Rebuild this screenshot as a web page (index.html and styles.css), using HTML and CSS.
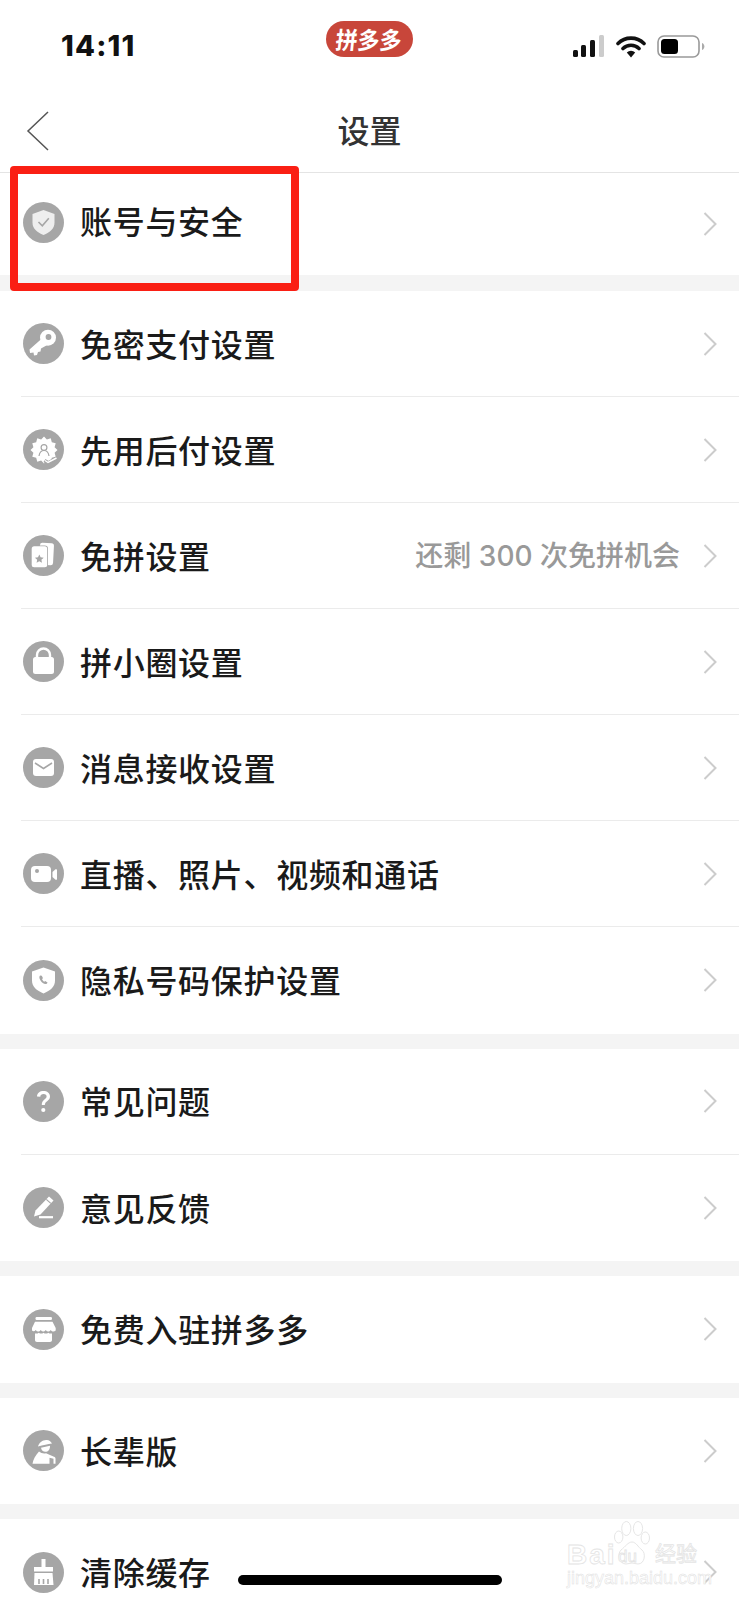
FILE: index.html
```html
<!DOCTYPE html>
<html lang="zh-CN">
<head>
    <meta charset="UTF-8">
    <meta name="viewport" content="width=device-width, initial-scale=1.0">
    <title>设置</title>
    <link rel="stylesheet" href="styles.css">
</head>
<body>
    <div class="screen">
        <div class="status-bar">
            <div class="time">14:11</div>
            <div class="app-pill"><span class="pill-text">拼多多</span></div>
            <div class="status-icons">
                <svg width="32" height="22" viewBox="0 0 32 22"><rect x="0" y="15" width="5" height="7" rx="1.5" fill="#111"/><rect x="8" y="10" width="5" height="12" rx="1.5" fill="#111"/><rect x="17" y="5" width="5" height="17" rx="1.5" fill="#111"/><rect x="26" y="0" width="5" height="22" rx="1.5" fill="#ccc"/></svg>
                <svg width="30" height="23" viewBox="0 0 30 23"><path d="M2 8.5a18.5 18.5 0 0 1 26 0M7 13.5a11.5 11.5 0 0 1 16 0" fill="none" stroke="#111" stroke-width="3.6" stroke-linecap="round"/><path d="M10.8 17.4a6 6 0 0 1 8.4 0L15 22.5z" fill="#111"/></svg>
                <svg width="48" height="23" viewBox="0 0 48 23"><rect x="1" y="1" width="41" height="21" rx="6" fill="none" stroke="#999" stroke-width="1.6"/><rect x="4" y="4" width="17" height="15" rx="3.5" fill="#000"/><path d="M45 8c1.6.6 2.4 2 2.4 3.5S46.600 14.400 45 15z" fill="#aaa"/></svg>
            </div>
        </div>

        <div class="nav">
            <svg class="back" width="24" height="40" viewBox="0 0 24 40"><path d="M22 1 2 20l20 19" fill="none" stroke="#555" stroke-width="1.5"/></svg>
            <h1 class="title">设置</h1>
        </div>

        <div class="group">
            <div class="row row-first">
                <svg class="icon" viewBox="0 0 41 41"><circle cx="20.500" cy="20.500" r="20.500" fill="#a6a6a6"/><path d="M20.500 8l11 4v8.500c0 6-4.500 10-11 12.500-6.500-2.500-11-6.500-11-12.500V12z" fill="#eee"/><path d="M15.500 20l3.800 3.800 6.500-7.500" fill="none" stroke="#a6a6a6" stroke-width="1.600"/></svg>
                <span class="label">账号与安全</span>
                <svg class="chevron" viewBox="0 0 14 24"><path d="M1.500 1 12.500 12 1.500 23" fill="none" stroke="#ccc" stroke-width="2"/></svg>
            </div>
        </div>

        <div class="band band-first"></div>

        <div class="group">
            <div class="row">
                <svg class="icon" viewBox="0 0 41 41"><circle cx="20.500" cy="20.500" r="20.500" fill="#a6a6a6"/><circle cx="25" cy="14.700" r="8" fill="#fff"/><path d="M19.500 15 6.500 26.500l.5 3.500 3.500-.5.500 3 3-.5 1-3 2.500-.5.500-3 9-5z" fill="#fff"/><circle cx="25.500" cy="14" r="2.900" fill="#a6a6a6"/></svg>
                <span class="label">免密支付设置</span>
                <svg class="chevron" viewBox="0 0 14 24"><path d="M1.500 1 12.500 12 1.500 23" fill="none" stroke="#ccc" stroke-width="2"/></svg>
            </div>
            <div class="row">
                <svg class="icon" viewBox="0 0 41 41"><circle cx="20.500" cy="20.500" r="20.500" fill="#a6a6a6"/><polygon points="34.500,21 31.600,23.850 32.700,27.750 28.800,28.800 27.750,32.700 23.850,31.600 21,34.500 18.150,31.600 14.250,32.700 13.200,28.800 9.300,27.750 10.400,23.850 7.500,21 10.400,18.150 9.300,14.250 13.200,13.200 14.250,9.300 18.150,10.400 21,7.500 23.850,10.400 27.750,9.300 28.800,13.200 32.700,14.250 31.600,18.150" fill="#fff"/><circle cx="21" cy="18.500" r="2.900" fill="none" stroke="#a6a6a6" stroke-width="1.200"/><path d="M16 27c.5-3.500 2.500-5.500 5-5.500s4.500 2 5 5.500" fill="none" stroke="#a6a6a6" stroke-width="1.200"/><path d="M21.500 31.500l3.500 2.500 9-5" fill="none" stroke="#a6a6a6" stroke-width="3.600"/><path d="M22 31.500l3 2 8.500-4.500" fill="none" stroke="#fff" stroke-width="1.500"/></svg>
                <span class="label">先用后付设置</span>
                <svg class="chevron" viewBox="0 0 14 24"><path d="M1.500 1 12.500 12 1.500 23" fill="none" stroke="#ccc" stroke-width="2"/></svg>
            </div>
            <div class="row">
                <svg class="icon" viewBox="0 0 41 41"><circle cx="20.500" cy="20.500" r="20.500" fill="#a6a6a6"/><rect x="16.500" y="8" width="14" height="22" rx="2.500" fill="#fff" transform="rotate(3 23 19)"/><rect x="8.700" y="11.300" width="15.500" height="21" rx="2.500" fill="#fff" stroke="#a6a6a6" stroke-width="1.600" paint-order="stroke"/><path d="M16.300 19.500l1.300 2.800 3.100.4-2.300 2.100.6 3-2.700-1.500-2.700 1.500.6-3-2.300-2.100 3.100-.4z" fill="#a6a6a6"/></svg>
                <span class="label">免拼设置</span>
                <span class="value">还剩 300 次免拼机会</span>
                <svg class="chevron" viewBox="0 0 14 24"><path d="M1.500 1 12.500 12 1.500 23" fill="none" stroke="#ccc" stroke-width="2"/></svg>
            </div>
            <div class="row">
                <svg class="icon" viewBox="0 0 41 41"><circle cx="20.500" cy="20.500" r="20.500" fill="#a6a6a6"/><path d="M14 17v-3a6.500 6.500 0 0 1 13 0v3" fill="none" stroke="#fff" stroke-width="2.400"/><rect x="10" y="16" width="21" height="17" rx="2.500" fill="#fff"/></svg>
                <span class="label">拼小圈设置</span>
                <svg class="chevron" viewBox="0 0 14 24"><path d="M1.500 1 12.500 12 1.500 23" fill="none" stroke="#ccc" stroke-width="2"/></svg>
            </div>
            <div class="row">
                <svg class="icon" viewBox="0 0 41 41"><circle cx="20.500" cy="20.500" r="20.500" fill="#a6a6a6"/><rect x="10" y="12" width="21" height="17" rx="3" fill="#fff"/><path d="M12 16l8.500 5.500L29 16" fill="none" stroke="#a6a6a6" stroke-width="1.500"/></svg>
                <span class="label">消息接收设置</span>
                <svg class="chevron" viewBox="0 0 14 24"><path d="M1.500 1 12.500 12 1.500 23" fill="none" stroke="#ccc" stroke-width="2"/></svg>
            </div>
            <div class="row">
                <svg class="icon" viewBox="0 0 41 41"><circle cx="20.500" cy="20.500" r="20.500" fill="#a6a6a6"/><rect x="8" y="13" width="20" height="16" rx="4" fill="#fff"/><path d="M29.500 19l3-2.700c.6-.4 1.500 0 1.500.8v8.800c0 .8-.9 1.200-1.500.8l-3-2.700z" fill="#fff"/><circle cx="14" cy="18" r="2" fill="#a6a6a6"/></svg>
                <span class="label">直播、照片、视频和通话</span>
                <svg class="chevron" viewBox="0 0 14 24"><path d="M1.500 1 12.500 12 1.500 23" fill="none" stroke="#ccc" stroke-width="2"/></svg>
            </div>
            <div class="row">
                <svg class="icon" viewBox="0 0 41 41"><circle cx="20.500" cy="20.500" r="20.500" fill="#a6a6a6"/><path d="M20.500 7.500l11.500 4v9c0 6-4.500 10-11.500 13-7-3-11.500-7-11.500-13v-9z" fill="#fff"/><path d="M17 15.500c-1 1-.8 3 .5 5s3.200 3.400 5 3.500c1.200 0 2-.8 2-1.600l-2.300-1.400-1 .8c-1-.6-1.800-1.600-2.200-2.800l1-.8-1.200-2.400z" fill="#a6a6a6"/></svg>
                <span class="label">隐私号码保护设置</span>
                <svg class="chevron" viewBox="0 0 14 24"><path d="M1.500 1 12.500 12 1.500 23" fill="none" stroke="#ccc" stroke-width="2"/></svg>
            </div>
        </div>

        <div class="band"></div>

        <div class="group">
            <div class="row">
                <svg class="icon" viewBox="0 0 41 41"><circle cx="20.500" cy="20.500" r="20.500" fill="#a6a6a6"/><path d="M14 15.500c0-3.500 3-5.500 6.500-5.500s6.500 2 6.500 5.500c0 4.500-5 4.500-5.200 8.500h-3c-.2-5.500 4.800-5.500 4.800-8.500 0-1.500-1-2.500-3-2.500s-3.200 1-3.300 2.800z" fill="#fff"/><circle cx="20.300" cy="29" r="2.100" fill="#fff"/></svg>
                <span class="label">常见问题</span>
                <svg class="chevron" viewBox="0 0 14 24"><path d="M1.500 1 12.500 12 1.500 23" fill="none" stroke="#ccc" stroke-width="2"/></svg>
            </div>
            <div class="row">
                <svg class="icon" viewBox="0 0 41 41"><circle cx="20.500" cy="20.500" r="20.500" fill="#a6a6a6"/><path d="M26 9.500l4.500 4-13 14-6.500 2 1.500-6z" fill="#fff"/><path d="M23.300 12.400l4.500 4" stroke="#a6a6a6" stroke-width="1.200"/><path d="M16 30.200h14" stroke="#fff" stroke-width="2.200"/></svg>
                <span class="label">意见反馈</span>
                <svg class="chevron" viewBox="0 0 14 24"><path d="M1.500 1 12.500 12 1.500 23" fill="none" stroke="#ccc" stroke-width="2"/></svg>
            </div>
        </div>

        <div class="band"></div>

        <div class="group">
            <div class="row">
                <svg class="icon" viewBox="0 0 41 41"><circle cx="20.500" cy="20.500" r="20.500" fill="#a6a6a6"/><rect x="12.500" y="8" width="16.500" height="3" rx="1.200" fill="#fff"/><path d="M12 12.800h17.500l3.200 6.200v2.500c-1.500 1.500-3.500 1.500-5-.5-1.500 2-3.500 2-5 0-1.500 2-3.500 2-5 0-1.500 2-3.500 2-5 0-1.200 1.500-2.500 1.500-3.700.5V19z" fill="#fff"/><path d="M12 24.500c1.500.3 2.800 0 3.800-.8 1.500 1.200 3.200 1.200 4.700 0 1.500 1.200 3.300 1.200 4.800 0 1 .8 2.300 1.100 3.700.8V31c0 1.200-.8 2-2 2H14c-1.200 0-2-.8-2-2z" fill="#fff"/></svg>
                <span class="label">免费入驻拼多多</span>
                <svg class="chevron" viewBox="0 0 14 24"><path d="M1.500 1 12.500 12 1.500 23" fill="none" stroke="#ccc" stroke-width="2"/></svg>
            </div>
        </div>

        <div class="band"></div>

        <div class="group">
            <div class="row">
                <svg class="icon" viewBox="0 0 41 41"><circle cx="20.500" cy="20.500" r="20.500" fill="#a6a6a6"/><path d="M15 16.500c1-4 5-7 9-6.500 2 .2 4 1.500 5 3.500-4 .5-9 1.500-14 3z" fill="#fff"/><path d="M18 17.800l9-2c0 4-2 6-4.500 6s-4-1.500-4.500-4z" fill="#fff"/><path d="M16 21.500c2 1.800 5 2.400 7 1.700l8 3.500c1 .4 1.500 1 1.500 2v5h-2v-5l-4-1v6H9.500c.5-4 3-8.500 6.500-12.200z" fill="#fff"/></svg>
                <span class="label">长辈版</span>
                <svg class="chevron" viewBox="0 0 14 24"><path d="M1.500 1 12.500 12 1.500 23" fill="none" stroke="#ccc" stroke-width="2"/></svg>
            </div>
        </div>

        <div class="band"></div>

        <div class="group">
            <div class="row">
                <svg class="icon" viewBox="0 0 41 41"><circle cx="20.500" cy="20.500" r="20.500" fill="#a6a6a6"/><path d="M18.500 7h4v8h7.500v4.500H11V15h7.500z" fill="#fff"/><path d="M11.500 21h18l1 12H11z" fill="#fff"/><path d="M16 27v5M20.500 27v5M25 27v5" stroke="#a6a6a6" stroke-width="1.600"/></svg>
                <span class="label">清除缓存</span>
                <svg class="chevron" viewBox="0 0 14 24"><path d="M1.500 1 12.500 12 1.500 23" fill="none" stroke="#ccc" stroke-width="2"/></svg>
            </div>
        </div>

        <!-- annotation and overlays -->
        <div class="highlight"></div>
        <div class="watermark">
            <svg class="paw" width="38" height="46" viewBox="0 0 38 46"><g fill="#fff" stroke="#e6e6e6" stroke-width="1"><ellipse cx="5.700" cy="17" rx="4.200" ry="6"/><ellipse cx="13.300" cy="8.500" rx="4.600" ry="7"/><ellipse cx="25" cy="8.500" rx="4.600" ry="7"/><ellipse cx="32.300" cy="18" rx="4.200" ry="6"/><path d="M19 22c4 0 6 5 10 8 4 3 3 14-4 14-2 0-4-1-6-1s-4 1-6 1C6 44 4 34 8 30c4-3 7-8 11-8z"/></g></svg>
            <span class="wm-bai">Bai</span>
            <span class="wm-du">du</span>
            <span class="wm-jy">经验</span>
            <span class="wm-url">jingyan.baidu.com</span>
        </div>
        <div class="home-bar"></div>
    </div>
</body>
</html>
```

FILE: styles.css
```css
* {
    box-sizing: border-box;
}

body {
    margin: 0;
    background-color: #fff;
    font-family: "Noto Sans CJK SC", "Noto Sans", sans-serif;
    color: #1a1a1a;
}

.screen {
    position: relative;
    width: 739px;
    height: 1600px;
    overflow: hidden;
    background: white;
}

.status-bar {
    display: grid;
    grid-template-columns: 1fr auto 1fr;
    height: 90px;
    padding-top: 21px;
}

.time {
    padding-left: 61px;
    font-family: Inter, "Liberation Sans", sans-serif;
    font-size: 29px;
    font-weight: 800;
    letter-spacing: 1.2px;
    line-height: 50px;
    color: #111;
}

.app-pill {
    width: 87px;
    height: 36px;
    border-radius: 18px;
    background-color: #c8463a;
    color: white;
    font-size: 22px;
    font-weight: 700;
    line-height: 34px;
    text-align: center;
}

.pill-text {
    display: inline-block;
    transform: skewX(-6deg) scaleY(1.08);
}

.status-icons {
    display: flex;
    justify-content: flex-end;
    align-items: flex-start;
    gap: 11px;
    padding: 14px 34px 0 0;
}

.nav {
    position: relative;
    display: flex;
    justify-content: center;
    align-items: center;
    height: 83px;
    padding-bottom: 4px;
    border-bottom: 1px solid #e4e4e4;
}

.back {
    position: absolute;
    left: 26px;
    top: 21px;
}

.title {
    margin: 0;
    font-size: 32px;
    font-weight: 500;
    line-height: 44px;
    color: #333;
}

.row {
    display: flex;
    align-items: center;
    height: 105px;
    margin-left: 21px;
    padding: 0 22px 0 2px;
}

.row + .row {
    height: 106px;
    border-top: 1px solid #ebebeb;
}

/* last row of a group runs a little taller */
.row:last-child {
    height: 106.5px;
}

.row + .row:last-child {
    height: 107.5px;
}

.row-first,
.row-first:last-child {
    height: 102px;
}

.icon {
    flex: none;
    width: 41px;
    height: 41px;
}

.label {
    flex: 1;
    margin-left: 16px;
    padding-bottom: 2px;
    font-size: 32px;
    font-weight: 500;
    letter-spacing: 0.7px;
    line-height: 46px;
}

.row-first .icon {
    margin-bottom: 4px;
}

.row-first .label {
    padding-bottom: 9px;
}

.value {
    margin-right: 23px;
    font-family: Inter, "Noto Sans CJK SC", sans-serif;
    font-size: 28px;
    font-weight: 500;
    line-height: 40px;
    color: #999;
}

.chevron {
    flex: none;
    width: 14px;
    height: 24px;
}

.band {
    height: 15px;
    background-color: #f4f4f4;
}

.band-first {
    height: 16px;
}

.highlight {
    position: absolute;
    left: 10px;
    top: 166px;
    width: 289px;
    height: 125px;
    border: 8px solid #fa1f14;
    border-radius: 4px;
}

.watermark {
    position: absolute;
    left: 567px;
    top: 1520px;
    width: 134px;
    height: 64px;
    color: white;
    -webkit-text-stroke: 0.8px #e4e4e4;
    font-family: "Liberation Sans", sans-serif;
}

.paw {
    position: absolute;
    left: 46px;
    top: 0;
}

.wm-bai {
    position: absolute;
    left: 0;
    top: 22px;
    font-size: 28px;
    font-weight: 700;
    letter-spacing: 2px;
    line-height: 25px;
}

.wm-du {
    position: absolute;
    left: 51px;
    top: 27px;
    font-size: 17px;
    line-height: 20px;
}

.wm-jy {
    position: absolute;
    left: 88px;
    top: 19px;
    font-family: "Noto Sans CJK SC", sans-serif;
    font-size: 21px;
    line-height: 26px;
}

.wm-url {
    position: absolute;
    left: 0;
    top: 48px;
    font-size: 18px;
    line-height: 20px;
    -webkit-text-stroke: 0.5px #e0e0e0;
}

.home-bar {
    position: absolute;
    left: 238px;
    top: 1575px;
    width: 264px;
    height: 10px;
    border-radius: 5px;
    background-color: black;
}
```
